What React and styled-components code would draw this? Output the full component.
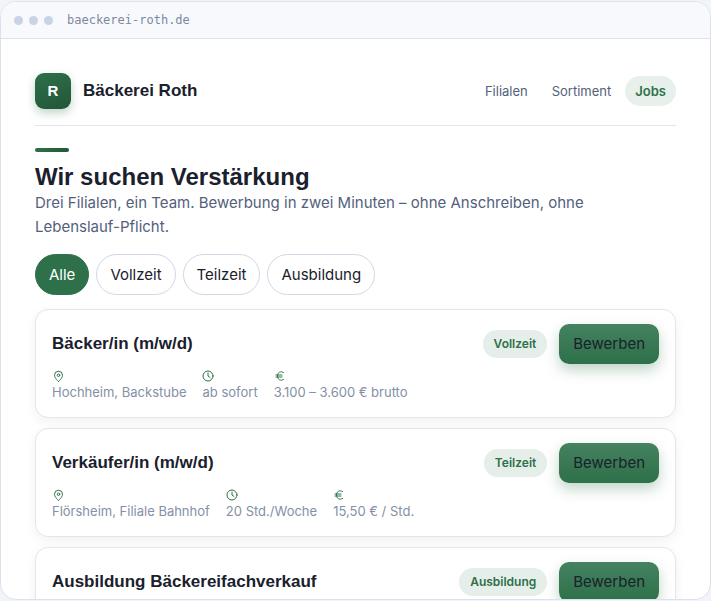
import React, { useState } from "react";
import styled, { createGlobalStyle } from "styled-components";

const navLinks = ["Filialen", "Sortiment", "Jobs"];

const filters = ["Alle", "Vollzeit", "Teilzeit", "Ausbildung"];

const jobs = [
  {
    title: "Bäcker/in (m/w/d)",
    type: "Vollzeit",
    details: {
      place: "Hochheim, Backstube",
      time: "ab sofort",
      pay: "3.100 – 3.600 € brutto",
    },
  },
  {
    title: "Verkäufer/in (m/w/d)",
    type: "Teilzeit",
    details: {
      place: "Flörsheim, Filiale Bahnhof",
      time: "20 Std./Woche",
      pay: "15,50 € / Std.",
    },
  },
  {
    title: "Ausbildung Bäckereifachverkauf",
    type: "Ausbildung",
  },
];

function PinIcon() {
  return (
    <Icon viewBox="0 0 24 24" aria-hidden="true">
      <path d="M13 23s8-6.500 8-12.500a8 8 0 0 0-16 0C5 16.500 13 23 13 23z" />
      <circle cx="13" cy="10.500" r="2.500" />
    </Icon>
  );
}

function ClockIcon() {
  return (
    <Icon viewBox="0 0 24 24" aria-hidden="true">
      <circle cx="12" cy="12" r="10" />
      <path d="M12 6v6l4 3" />
    </Icon>
  );
}

function EuroIcon() {
  return (
    <Icon viewBox="0 0 24 24" aria-hidden="true">
      <path d="M19 5C13 1.500 7 5 7 12s6 10.500 12 7M4 10h12M4 14h12" />
    </Icon>
  );
}

function JobCard({ job }) {
  return (
    <Card>
      <CardTop>
        <JobTitle>{job.title}</JobTitle>
        <Badge>{job.type}</Badge>
        <ApplyButton type="button">Bewerben</ApplyButton>
      </CardTop>
      {job.details && (
        <Meta>
          <MetaItem>
            <PinIcon />
            {job.details.place}
          </MetaItem>
          <MetaItem>
            <ClockIcon />
            {job.details.time}
          </MetaItem>
          <MetaItem>
            <EuroIcon />
            {job.details.pay}
          </MetaItem>
        </Meta>
      )}
    </Card>
  );
}

export default function App() {
  const [active, setActive] = useState("Alle");
  const visible = jobs.filter((job) => active === "Alle" || job.type === active);

  return (
    <>
      <GlobalStyle />
      <Frame>
        <BrowserBar>
          <Dot />
          <Dot />
          <Dot />
          <Address>baeckerei-roth.de</Address>
        </BrowserBar>
        <Page>
          <Header>
            <Logo>R</Logo>
            <Brand>Bäckerei Roth</Brand>
            <Nav>
              {navLinks.map((link) => (
                <NavLink key={link} href="#" $active={link === "Jobs"}>
                  {link}
                </NavLink>
              ))}
            </Nav>
          </Header>
          <Accent />
          <Title>Wir suchen Verstärkung</Title>
          <Intro>
            Drei Filialen, ein Team. Bewerbung in zwei Minuten – ohne
            Anschreiben, ohne Lebenslauf-Pflicht.
          </Intro>
          <Filters>
            {filters.map((name) => (
              <FilterButton
                key={name}
                type="button"
                aria-pressed={name === active}
                $active={name === active}
                onClick={() => setActive(name)}
              >
                {name}
              </FilterButton>
            ))}
          </Filters>
          <JobList>
            {visible.map((job) => (
              <JobCard key={job.title} job={job} />
            ))}
          </JobList>
        </Page>
      </Frame>
    </>
  );
}

const GlobalStyle = createGlobalStyle`
  * {
    box-sizing: border-box;
  }

  body {
    margin: 0;
    background: #f1f4f9;
    color: #1a202c;
    font-family: Inter, "Liberation Sans", sans-serif;
    font-size: 15px;
    line-height: 24px;
  }

  h1, h2, p {
    margin: 0;
  }
`;

const Frame = styled.div`
  display: flex;
  flex-direction: column;
  height: calc(100vh - 2px);
  margin-top: 1px;
  overflow: hidden;
  background: #fff;
  border: 1px solid #dce2ec;
  border-radius: 16px;
`;

const BrowserBar = styled.div`
  display: flex;
  flex: none;
  align-items: center;
  gap: 6px;
  height: 37px;
  padding: 0 13px;
  background: #f7f9fd;
  border-bottom: 1px solid #dce2ec;
`;

const Dot = styled.span`
  width: 9px;
  height: 9px;
  border-radius: 50%;
  background: #c8d3e5;
`;

const Address = styled.span`
  margin-left: 8px;
  color: #7d89a1;
  font-family: "DejaVu Sans Mono", monospace;
  font-size: 12px;
`;

const Page = styled.main`
  flex: 1;
  min-height: 0;
  padding: 34px;
  overflow: hidden;
`;

const Header = styled.header`
  display: flex;
  align-items: center;
  gap: 12px;
  padding-bottom: 16px;
  border-bottom: 1px solid #e2e6ea;
`;

const Logo = styled.span`
  display: grid;
  place-items: center;
  width: 36px;
  height: 36px;
  border-radius: 9px;
  background: linear-gradient(160deg, #2d7049, #235638);
  box-shadow: 0 4px 10px rgba(45, 112, 73, 0.3);
  color: #fff;
  font-family: "Liberation Sans", Arial, sans-serif;
  font-size: 15px;
  font-weight: 700;
`;

const Brand = styled.span`
  font-family: "Liberation Sans", Arial, sans-serif;
  font-size: 17px;
  font-weight: 700;
`;

const Nav = styled.nav`
  display: flex;
  gap: 4px;
  margin-left: auto;
`;

const NavLink = styled.a`
  padding: 5px 10px;
  border-radius: 16px;
  background: ${({ $active }) => ($active ? "#e8f0eb" : "transparent")};
  color: ${({ $active }) => ($active ? "#2d7049" : "#535f7b")};
  font-size: 13px;
  font-weight: ${({ $active }) => ($active ? 600 : 400)};
  line-height: 20px;
  text-decoration: none;
`;

const Accent = styled.div`
  width: 34px;
  height: 4px;
  margin: 22px 0 10px;
  border-radius: 2px;
  background: linear-gradient(90deg, #2d7049, #235638);
`;

const Title = styled.h1`
  font-family: "Liberation Sans", Arial, sans-serif;
  font-size: 24px;
  font-weight: 700;
  line-height: 29px;
`;

const Intro = styled.p`
  max-width: 600px;
  color: #535f7b;
`;

const Filters = styled.div`
  display: flex;
  flex-wrap: wrap;
  gap: 7px;
  margin: 15px 0 14px;
`;

const FilterButton = styled.button`
  padding: 8px 13px;
  border: 1px solid ${({ $active }) => ($active ? "#2d7049" : "#d3d6e4")};
  border-radius: 21px;
  background: ${({ $active }) => ($active ? "#2d7049" : "#fff")};
  color: ${({ $active }) => ($active ? "#fff" : "#1a202c")};
  font: inherit;
  line-height: 23px;
  cursor: pointer;
`;

const JobList = styled.div`
  display: flex;
  flex-direction: column;
  gap: 10px;
`;

const Card = styled.article`
  padding: 14px 16px 15px;
  border: 1px solid #e2e6ea;
  border-radius: 13px;
  background: #fff;
  box-shadow: 0 4px 12px rgba(26, 32, 44, 0.06);
`;

const CardTop = styled.div`
  display: flex;
  align-items: center;
  gap: 12px;
`;

const JobTitle = styled.h2`
  flex: 1;
  font-family: "Liberation Sans", Arial, sans-serif;
  font-size: 17px;
  font-weight: 700;
  line-height: 22px;
`;

const Badge = styled.span`
  padding: 4px 11px;
  border-radius: 15px;
  background: #e5eee9;
  color: #2d7049;
  font-size: 12px;
  font-weight: 600;
  line-height: 20px;
`;

const ApplyButton = styled.button`
  padding: 8px 14px;
  border: 0;
  border-radius: 10px;
  background: linear-gradient(#458260, #2d7049);
  box-shadow: 0 6px 14px rgba(45, 112, 73, 0.3);
  color: #1a202c;
  font: inherit;
  cursor: pointer;
`;

const Meta = styled.div`
  display: flex;
  flex-wrap: wrap;
  gap: 16px;
`;

const MetaItem = styled.span`
  color: #8490a6;
  font-size: 13px;
  line-height: 20px;
`;

const Icon = styled.svg`
  display: block;
  width: 12px;
  height: 12px;
  margin-top: 6px;
  fill: none;
  stroke: #2d7049;
  stroke-width: 2;
  stroke-linecap: round;
  stroke-linejoin: round;
`;
